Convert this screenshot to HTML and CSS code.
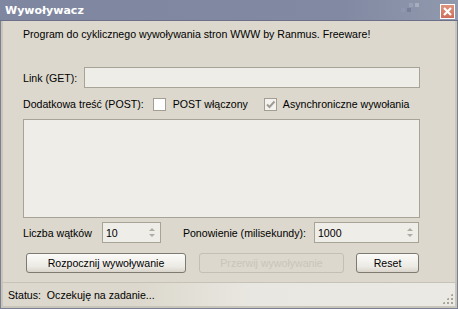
FILE: index.html
```html
<!DOCTYPE html>
<html lang="pl">
<head>
    <meta charset="UTF-8">
    <title>Wywoływacz</title>
    <link rel="stylesheet" href="styles.css">
</head>
<body>
    <div class="window">
        <div class="titlebar">
            <span class="title">Wywoływacz</span>
            <span class="dots">
                <i class="d1"></i><i class="d2"></i><i class="d3"></i><i class="d4"></i><i class="d5"></i>
            </span>
            <span class="close">
                <svg width="9" height="9" viewBox="0 0 9 9"><path d="M1 1L8 8M8 1L1 8" stroke="#fff" stroke-width="2.2"/></svg>
            </span>
        </div>

        <div class="content">
            <p class="intro">Program do cyklicznego wywoływania stron WWW by Ranmus. Freeware!</p>

            <div class="row link-row">
                <label class="lbl">Link (GET):</label>
                <div class="field link-field"></div>
            </div>

            <div class="row post-row">
                <span class="lbl">Dodatkowa treść (POST):</span>
                <span class="check"></span>
                <span class="check-lbl">POST włączony</span>
                <span class="check checked">
                    <svg width="11" height="11" viewBox="0 0 11 11"><path d="M2 5.5L4.5 8L9.5 2.5" fill="none" stroke="#a09c94" stroke-width="2"/></svg>
                </span>
                <span class="check-lbl">Asynchroniczne wywołania</span>
            </div>

            <div class="field textarea"></div>

            <div class="row spin-row">
                <span class="lbl">Liczba wątków</span>
                <div class="field spin threads">
                    <span class="val">10</span>
                    <span class="arrows"><b class="up"></b><b class="down"></b></span>
                </div>
                <span class="lbl retry-lbl">Ponowienie (milisekundy):</span>
                <div class="field spin retry">
                    <span class="val">1000</span>
                    <span class="arrows"><b class="up"></b><b class="down"></b></span>
                </div>
            </div>

            <div class="row buttons">
                <button class="btn start">Rozpocznij wywoływanie</button>
                <button class="btn stop" disabled>Przerwij wywoływanie</button>
                <button class="btn reset">Reset</button>
            </div>
        </div>

        <div class="statusbar">
            <span>Status:&nbsp; Oczekuję na zadanie...</span>
            <span class="grip"></span>
        </div>
    </div>
</body>
</html>
```

FILE: styles.css
```css
body {
    margin: 0;
    font-family: "Liberation Sans", Arial, sans-serif;
    font-size: 10.6px;
    color: #000;
    background: #8a8a8a;
}

.window {
    width: 458px;
    height: 309px;
    box-sizing: border-box;
    background: #dcd8cd;
    border: 1px solid #7b7f94;
    border-top: none;
    display: flex;
    flex-direction: column;
    position: relative;
    box-shadow: inset 2px 0 0 #c9c5ba, inset -2px 0 0 #c9c5ba, inset 0 -2px 0 #c9c5ba;
}

.titlebar {
    height: 20px;
    margin: 0 -1px;
    background: linear-gradient(to right, #7f869f 0%, #828aa3 75%, #9199ae 100%);
    border-bottom: 1px solid #6b7088;
    display: flex;
    align-items: center;
    padding: 0 3px 0 5px;
    position: relative;
}

.title {
    color: #fff;
    font-family: "DejaVu Sans", Verdana, sans-serif;
    font-weight: bold;
    font-size: 11px;
    flex: 1;
}

.dots {
    position: absolute;
    right: 33px;
    top: 3px;
    width: 24px;
    height: 14px;
}

.dots i {
    position: absolute;
    width: 4px;
    height: 4px;
    background: #9aa0b6;
}

.dots .d1 { left: 8px; top: 0; }
.dots .d2 { left: 14px; top: 0; background: #a7acbe; }
.dots .d3 { left: 0; top: 5px; background: #8f96ad; }
.dots .d4 { left: 6px; top: 5px; background: #777e98; }
.dots .d5 { left: 12px; top: 5px; background: #8a91a8; }

.close {
    border: 1px solid #fff;
    background: linear-gradient(#e0937e, #cc6f5a);
    display: flex;
    align-items: center;
    justify-content: center;
    box-sizing: border-box;
    width: 15px;
    height: 15px;
    margin-top: 2px;
}

.content {
    flex: 1;
    padding: 6px 37px 0 22px;
}

.intro {
    margin: 0 0 26px;
    line-height: 14px;
}

.row {
    display: flex;
    align-items: center;
    white-space: nowrap;
}

.lbl,
.check-lbl {
    flex-shrink: 0;
}

.field {
    background: #eeede8;
    border: 1px solid #a7a396;
    box-sizing: border-box;
}

.link-row {
    gap: 7px;
}

.link-field {
    flex: 1;
    height: 21px;
}

.post-row {
    margin-top: 8px;
    height: 16px;
}

.check {
    flex-shrink: 0;
    width: 13px;
    height: 13px;
    border: 1px solid #a29e93;
    background: #fff;
    box-sizing: border-box;
    margin: 0 7px 0 9px;
    display: flex;
    align-items: center;
    justify-content: center;
}

.check.checked {
    margin-left: 16px;
    margin-right: 6px;
    background: #f3f2ee;
}

.textarea {
    margin-top: 7px;
    height: 99px;
}

.spin-row {
    margin-top: 4px;
    height: 21px;
}

.spin {
    flex-shrink: 0;
    height: 21px;
    display: flex;
    align-items: center;
    justify-content: space-between;
    padding-left: 3px;
}

.threads {
    width: 59px;
    margin-left: 10px;
}

.retry-lbl {
    margin-left: 22px;
}

.retry {
    width: 105px;
    margin-left: 8px;
}

.val {
    color: #000;
}

.arrows {
    display: flex;
    flex-direction: column;
    gap: 3px;
    width: 15px;
    align-items: center;
}

.arrows b {
    width: 0;
    height: 0;
    border-left: 3px solid transparent;
    border-right: 3px solid transparent;
}

.arrows .up {
    border-bottom: 3px solid #b0aca2;
}

.arrows .down {
    border-top: 3px solid #b0aca2;
}

.buttons {
    margin-top: 10px;
    padding-left: 3px;
}

.btn {
    height: 20px;
    font-family: "Liberation Sans", Arial, sans-serif;
    font-size: 10.6px;
    color: #000;
    background: linear-gradient(#fbfbf9, #eceae4 70%, #d9d5cc);
    border: 1px solid #7d7a71;
    border-radius: 3px;
    padding: 0;
}

.start {
    width: 160px;
}

.stop {
    width: 145px;
    margin-left: 13px;
    color: #c9c5bb;
    background: #dcd8cd;
    border-color: #c3bfb4;
}

.reset {
    width: 63px;
    margin-left: 12px;
}

.statusbar {
    height: 24px;
    margin: auto 2px 2px;
    border-top: 1px solid #c6c2b8;
    background: linear-gradient(to right, #dcd8cd 30%, #e9e7e1 55%, #ebe9e4 100%);
    display: flex;
    align-items: center;
    padding-left: 5px;
    box-sizing: border-box;
    position: relative;
}

.grip {
    position: absolute;
    right: 2px;
    bottom: 2px;
    width: 11px;
    height: 11px;
    background:
        radial-gradient(circle, #a8a498 1px, transparent 1.2px) 0 0 / 4px 4px;
    clip-path: polygon(100% 0, 100% 100%, 0 100%);
}
```
